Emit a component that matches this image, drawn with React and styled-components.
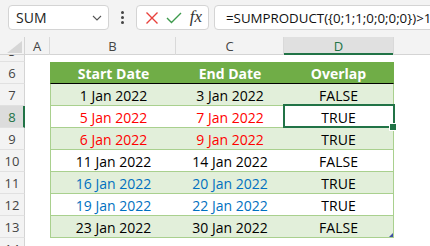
import React from 'react'
import styled, { createGlobalStyle } from 'styled-components'

const UI_FONT = `"Segoe UI", "Open Sans", "Noto Sans", sans-serif`
const GREEN = '#217346'

const GlobalStyle = createGlobalStyle`
  * { box-sizing: border-box; }
  html, body { margin: 0; padding: 0; background: #fff; }
  body { font-family: ${UI_FONT}; }
`

const Frame = styled.div`
  width: 430px;
  height: 246px;
  overflow: hidden;
  display: flex;
  flex-direction: column;
  background: #fff;
`

const FormulaBar = styled.div`
  height: 37px;
  flex: none;
  background: #f3f3f3;
  display: flex;
  align-items: flex-start;
  padding: 5px 0 0 8px;
  gap: 5px;
`

const Box = styled.div`
  height: 25px;
  background: #fff;
  border: 1px solid #d4d4d4;
  border-radius: 4px;
  display: flex;
  align-items: center;
`

const NameBox = styled(Box)`
  width: 101px;
  padding: 0 6px 0 7px;
  justify-content: space-between;
  font-size: 14px;
  color: #222;
`

const Dots = styled.div`
  width: 17px;
  height: 25px;
  display: flex;
  flex-direction: column;
  align-items: center;
  justify-content: center;
  gap: 2px;
  span {
    width: 3px;
    height: 3px;
    border-radius: 50%;
    background: #444;
  }
`

const ActionBox = styled(Box)`
  width: 73px;
  padding: 0 6px 0 8px;
  justify-content: space-between;
`

const Fx = styled.span`
  font-family: "Liberation Serif", "DejaVu Serif", serif;
  font-style: italic;
  font-size: 17px;
  color: #333;
  line-height: 1;
  margin-top: -2px;
`

const FormulaBox = styled(Box)`
  flex: 1;
  margin-right: -10px;
  padding-left: 11px;
  font-size: 13.3px;
  color: #111;
  white-space: nowrap;
`

const Caret = styled.span`
  display: inline-block;
  width: 1px;
  height: 17px;
  background: #000;
  margin-left: 1px;
  vertical-align: middle;
`

const COLS = '25px 25px 126px 108px 110px 1fr'

const HeaderRow = styled.div`
  display: grid;
  grid-template-columns: ${COLS};
  height: 18px;
  flex: none;
  background: #f3f3f3;
  border-bottom: 1px solid #d4d4d4;
`

const Corner = styled.div`
  border-right: 1px solid #d4d4d4;
  display: flex;
  align-items: flex-end;
  justify-content: flex-end;
  padding: 0 2px 1px 0;
`

const ColHead = styled.div`
  display: flex;
  align-items: center;
  justify-content: center;
  font-size: 13px;
  color: ${p => (p.$active ? GREEN : '#444')};
  background: ${p => (p.$active ? '#e0e0e0' : 'transparent')};
  border-right: 1px solid ${p => (p.$last ? 'transparent' : '#d9d9d9')};
  box-shadow: ${p => (p.$active ? `inset 0 -2px 0 ${GREEN}` : 'none')};
  margin-bottom: -1px;
`

const Sheet = styled.div`
  flex: 1;
  overflow: hidden;
`

const Rows = styled.div`
  margin-top: -15px;
`

const Row = styled.div`
  display: grid;
  grid-template-columns: ${COLS};
  height: 22px;
`

const RowHead = styled.div`
  display: flex;
  align-items: center;
  justify-content: center;
  font-size: 13px;
  color: ${p => (p.$active ? GREEN : '#444')};
  background: ${p => (p.$active ? '#dcdcdc' : '#f3f3f3')};
  border-bottom: 1px solid #e1e1e1;
  border-right: ${p => (p.$active ? `2px solid ${GREEN}` : '1px solid #d4d4d4')};
  padding-left: ${p => (p.$active ? '1px' : '0')};
`

const bandBg = { head: '#70ad47', odd: '#e2efda', even: '#ffffff' }

const Cell = styled.div`
  position: relative;
  display: flex;
  align-items: center;
  justify-content: center;
  font-size: 14px;
  padding-top: 1px;
  font-weight: ${p => (p.$band === 'head' ? 700 : 400)};
  color: ${p => p.$color || '#000'};
  background: ${p => bandBg[p.$band] || 'transparent'};
  border-bottom: ${p =>
    p.$band === 'head' ? '1px solid #000' : p.$band ? '1px solid #a9d08e' : 'none'};
  border-left: ${p => (p.$band && p.$first ? `1px solid ${p.$band === 'head' ? '#70ad47' : '#a9d08e'}` : 'none')};
  border-right: ${p => (p.$band && p.$last ? `1px solid ${p.$band === 'head' ? '#70ad47' : '#a9d08e'}` : 'none')};

  ${p => p.$selected && `
    &::after {
      content: '';
      position: absolute;
      top: -2px;
      left: -1px;
      right: -2px;
      bottom: -1px;
      border: 2px solid ${GREEN};
    }
    &::before {
      content: '';
      position: absolute;
      right: -4px;
      bottom: -4px;
      width: 6px;
      height: 6px;
      background: ${GREEN};
      border: 1px solid #fff;
      z-index: 1;
    }
  `}

  ${p => p.$resize && `
    &::after {
      content: '';
      position: absolute;
      right: 0;
      bottom: 0;
      width: 0;
      height: 0;
      border-left: 4px solid transparent;
      border-bottom: 4px solid #3f51a5;
    }
  `}
`

const RED = '#ff0000'
const BLUE = '#0070c0'

const data = [
  ['1 Jan 2022', '3 Jan 2022', 'FALSE', null],
  ['5 Jan 2022', '7 Jan 2022', 'TRUE', RED],
  ['6 Jan 2022', '9 Jan 2022', 'TRUE', RED],
  ['11 Jan 2022', '14 Jan 2022', 'FALSE', null],
  ['16 Jan 2022', '20 Jan 2022', 'TRUE', BLUE],
  ['19 Jan 2022', '22 Jan 2022', 'TRUE', BLUE],
  ['23 Jan 2022', '30 Jan 2022', 'FALSE', null],
]

const Chevron = () => (
  <svg width="10" height="6" viewBox="0 0 10 6">
    <polyline points="1,1 5,5 9,1" fill="none" stroke="#555" strokeWidth="1.1" />
  </svg>
)

const Cross = () => (
  <svg width="14" height="14" viewBox="0 0 14 14">
    <path d="M1.5 1.5 L12.5 12.5 M12.5 1.5 L1.5 12.5" stroke="#e8413c" strokeWidth="1.4" fill="none" />
  </svg>
)

const Check = () => (
  <svg width="16" height="12" viewBox="0 0 16 12">
    <polyline points="1,6 5.5,10.5 15,1" fill="none" stroke="#3d9a4c" strokeWidth="1.4" />
  </svg>
)

const CornerMark = () => (
  <svg width="15" height="12" viewBox="0 0 15 12">
    <polygon points="15,0 15,12 0,12" fill="#d6d6d6" />
  </svg>
)

const EmptyRow = ({ n }) => (
  <Row>
    <RowHead>{n}</RowHead>
    <Cell /><Cell /><Cell /><Cell /><Cell />
  </Row>
)

export default function App () {
  return <Frame>
    <GlobalStyle />
    <FormulaBar>
      <NameBox>
        <span>SUM</span>
        <Chevron />
      </NameBox>
      <Dots><span /><span /><span /></Dots>
      <ActionBox>
        <Cross />
        <Check />
        <Fx>fx</Fx>
      </ActionBox>
      <FormulaBox>
        {'=SUMPRODUCT({0;1;1;0;0;0;0})>1'}<Caret />
      </FormulaBox>
    </FormulaBar>

    <HeaderRow>
      <Corner><CornerMark /></Corner>
      <ColHead>A</ColHead>
      <ColHead>B</ColHead>
      <ColHead>C</ColHead>
      <ColHead $active>D</ColHead>
      <ColHead $last />
    </HeaderRow>

    <Sheet>
      <Rows>
        <EmptyRow n={5} />
        <Row>
          <RowHead>6</RowHead>
          <Cell />
          <Cell $band="head" $color="#fff" $first>Start Date</Cell>
          <Cell $band="head" $color="#fff">End Date</Cell>
          <Cell $band="head" $color="#fff" $last>Overlap</Cell>
          <Cell />
        </Row>
        {data.map(([start, end, overlap, color], i) => {
          const n = i + 7
          const band = i % 2 === 0 ? 'odd' : 'even'
          return <Row key={n}>
            <RowHead $active={n === 8}>{n}</RowHead>
            <Cell />
            <Cell $band={band} $color={color} $first>{start}</Cell>
            <Cell $band={band} $color={color}>{end}</Cell>
            <Cell $band={band} $last $selected={n === 8} $resize={n === 13}>{overlap}</Cell>
            <Cell />
          </Row>
        })}
        <EmptyRow n={14} />
      </Rows>
    </Sheet>
  </Frame>
}
